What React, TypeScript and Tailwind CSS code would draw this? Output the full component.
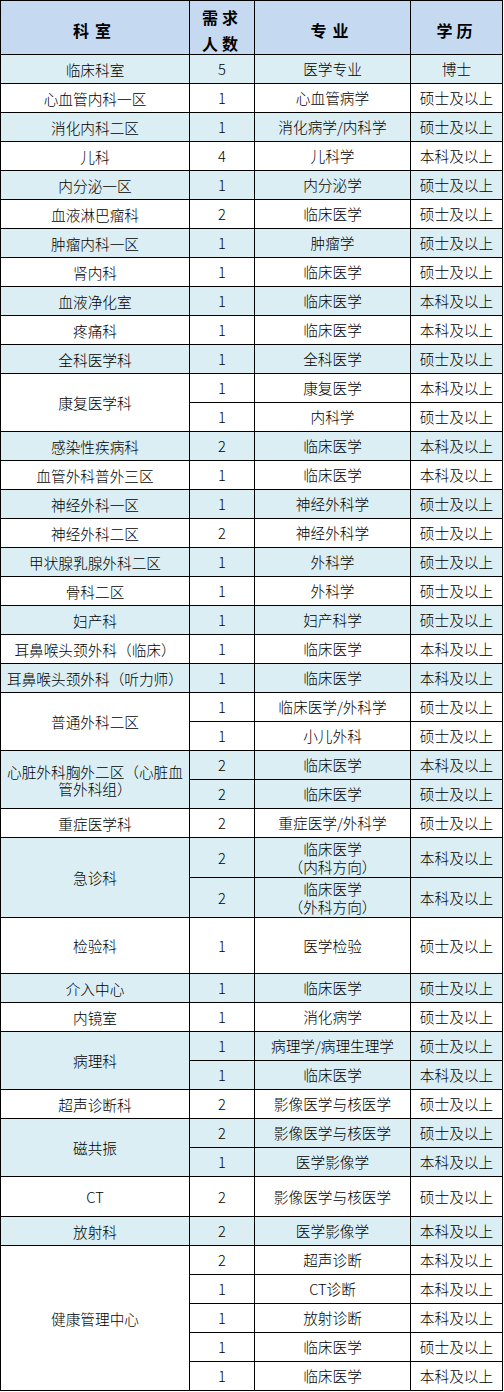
// 招聘岗位需求表
type Row = [string, string, string];

interface Group {
  dept: string;
  rows: Row[];
  h?: "tall" | "xl";
}

const groups: Group[] = [
  { dept: "临床科室", rows: [["5", "医学专业", "博士"]] },
  { dept: "心血管内科一区", rows: [["1", "心血管病学", "硕士及以上"]] },
  { dept: "消化内科二区", rows: [["1", "消化病学/内科学", "硕士及以上"]] },
  { dept: "儿科", rows: [["4", "儿科学", "本科及以上"]] },
  { dept: "内分泌一区", rows: [["1", "内分泌学", "硕士及以上"]] },
  { dept: "血液淋巴瘤科", rows: [["2", "临床医学", "硕士及以上"]] },
  { dept: "肿瘤内科一区", rows: [["1", "肿瘤学", "硕士及以上"]] },
  { dept: "肾内科", rows: [["1", "临床医学", "硕士及以上"]] },
  { dept: "血液净化室", rows: [["1", "临床医学", "本科及以上"]] },
  { dept: "疼痛科", rows: [["1", "临床医学", "本科及以上"]] },
  { dept: "全科医学科", rows: [["1", "全科医学", "硕士及以上"]] },
  {
    dept: "康复医学科",
    rows: [
      ["1", "康复医学", "本科及以上"],
      ["1", "内科学", "硕士及以上"],
    ],
  },
  { dept: "感染性疾病科", rows: [["2", "临床医学", "本科及以上"]] },
  { dept: "血管外科普外三区", rows: [["1", "临床医学", "本科及以上"]] },
  { dept: "神经外科一区", rows: [["1", "神经外科学", "硕士及以上"]] },
  { dept: "神经外科二区", rows: [["2", "神经外科学", "硕士及以上"]] },
  { dept: "甲状腺乳腺外科二区", rows: [["1", "外科学", "硕士及以上"]] },
  { dept: "骨科二区", rows: [["1", "外科学", "硕士及以上"]] },
  { dept: "妇产科", rows: [["1", "妇产科学", "硕士及以上"]] },
  { dept: "耳鼻喉头颈外科（临床）", rows: [["1", "临床医学", "本科及以上"]] },
  { dept: "耳鼻喉头颈外科（听力师）", rows: [["1", "临床医学", "本科及以上"]] },
  {
    dept: "普通外科二区",
    rows: [
      ["1", "临床医学/外科学", "硕士及以上"],
      ["1", "小儿外科", "硕士及以上"],
    ],
  },
  {
    dept: "心脏外科胸外二区（心脏血管外科组）",
    rows: [
      ["2", "临床医学", "本科及以上"],
      ["2", "临床医学", "硕士及以上"],
    ],
  },
  { dept: "重症医学科", rows: [["2", "重症医学/外科学", "硕士及以上"]] },
  {
    dept: "急诊科",
    h: "tall",
    rows: [
      ["2", "临床医学\n（内科方向）", "本科及以上"],
      ["2", "临床医学\n（外科方向）", "本科及以上"],
    ],
  },
  { dept: "检验科", h: "xl", rows: [["1", "医学检验", "硕士及以上"]] },
  { dept: "介入中心", rows: [["1", "临床医学", "硕士及以上"]] },
  { dept: "内镜室", rows: [["1", "消化病学", "硕士及以上"]] },
  {
    dept: "病理科",
    rows: [
      ["1", "病理学/病理生理学", "硕士及以上"],
      ["1", "临床医学", "本科及以上"],
    ],
  },
  { dept: "超声诊断科", rows: [["2", "影像医学与核医学", "硕士及以上"]] },
  {
    dept: "磁共振",
    rows: [
      ["2", "影像医学与核医学", "硕士及以上"],
      ["1", "医学影像学", "本科及以上"],
    ],
  },
  { dept: "CT", h: "tall", rows: [["2", "影像医学与核医学", "硕士及以上"]] },
  { dept: "放射科", rows: [["2", "医学影像学", "本科及以上"]] },
  {
    dept: "健康管理中心",
    rows: [
      ["2", "超声诊断", "本科及以上"],
      ["1", "CT诊断", "本科及以上"],
      ["1", "放射诊断", "本科及以上"],
      ["1", "临床医学", "硕士及以上"],
      ["1", "临床医学", "本科及以上"],
    ],
  },
];

const spanClass: Record<number, string> = {
  1: "row-span-1",
  2: "row-span-2",
  3: "row-span-3",
  4: "row-span-4",
  5: "row-span-5",
};

const heightClass = {
  normal: "h-[28px]",
  tall: "h-[39px]",
  xl: "h-[55px]",
};

const Cell = ({
  children,
  className = "",
}: {
  children: React.ReactNode;
  className?: string;
}) => (
  <div
    className={`flex items-center justify-center text-center px-[2px] whitespace-pre-line ${className}`}
  >
    {children}
  </div>
);

const App = () => {
  return (
    <div className="w-[504px] h-[1392px] bg-white font-['Noto_Sans_CJK_SC',sans-serif] text-black">
      <div className="grid grid-cols-[188px_64px_155px_91px] gap-px p-px bg-black w-[503px]">
        {/* 表头 */}
        <Cell className="h-[53px] bg-[#c5d9f1] font-bold text-[16px] tracking-[6px] pt-1">
          科室
        </Cell>
        <Cell className="h-[53px] bg-[#c5d9f1] font-bold text-[16px] tracking-[4px] leading-[26px] pt-1">
          {"需求\n人数"}
        </Cell>
        <Cell className="h-[53px] bg-[#c5d9f1] font-bold text-[16px] tracking-[6px] pt-1">
          专业
        </Cell>
        <Cell className="h-[53px] bg-[#c5d9f1] font-bold text-[16px] tracking-[4px] pt-1">
          学历
        </Cell>

        {groups.map((g, gi) => {
          const bg = gi % 2 === 0 ? "bg-[#daeef3]" : "bg-white";
          const h = heightClass[g.h ?? "normal"];
          return [
            <Cell
              key={`d-${gi}`}
              className={`${bg} ${spanClass[g.rows.length]} text-[14.67px] font-light leading-[17px]`}
            >
              {g.dept}
            </Cell>,
            ...g.rows.flatMap((r, ri) => [
              <Cell
                key={`n-${gi}-${ri}`}
                className={`${bg} ${h} text-[14.67px] font-light`}
              >
                {r[0]}
              </Cell>,
              <Cell
                key={`m-${gi}-${ri}`}
                className={`${bg} text-[14.67px] font-light leading-[18px]`}
              >
                {r[1]}
              </Cell>,
              <Cell
                key={`e-${gi}-${ri}`}
                className={`${bg} text-[14.67px] font-light`}
              >
                {r[2]}
              </Cell>,
            ]),
          ];
        })}
      </div>
    </div>
  );
};

export default App;
